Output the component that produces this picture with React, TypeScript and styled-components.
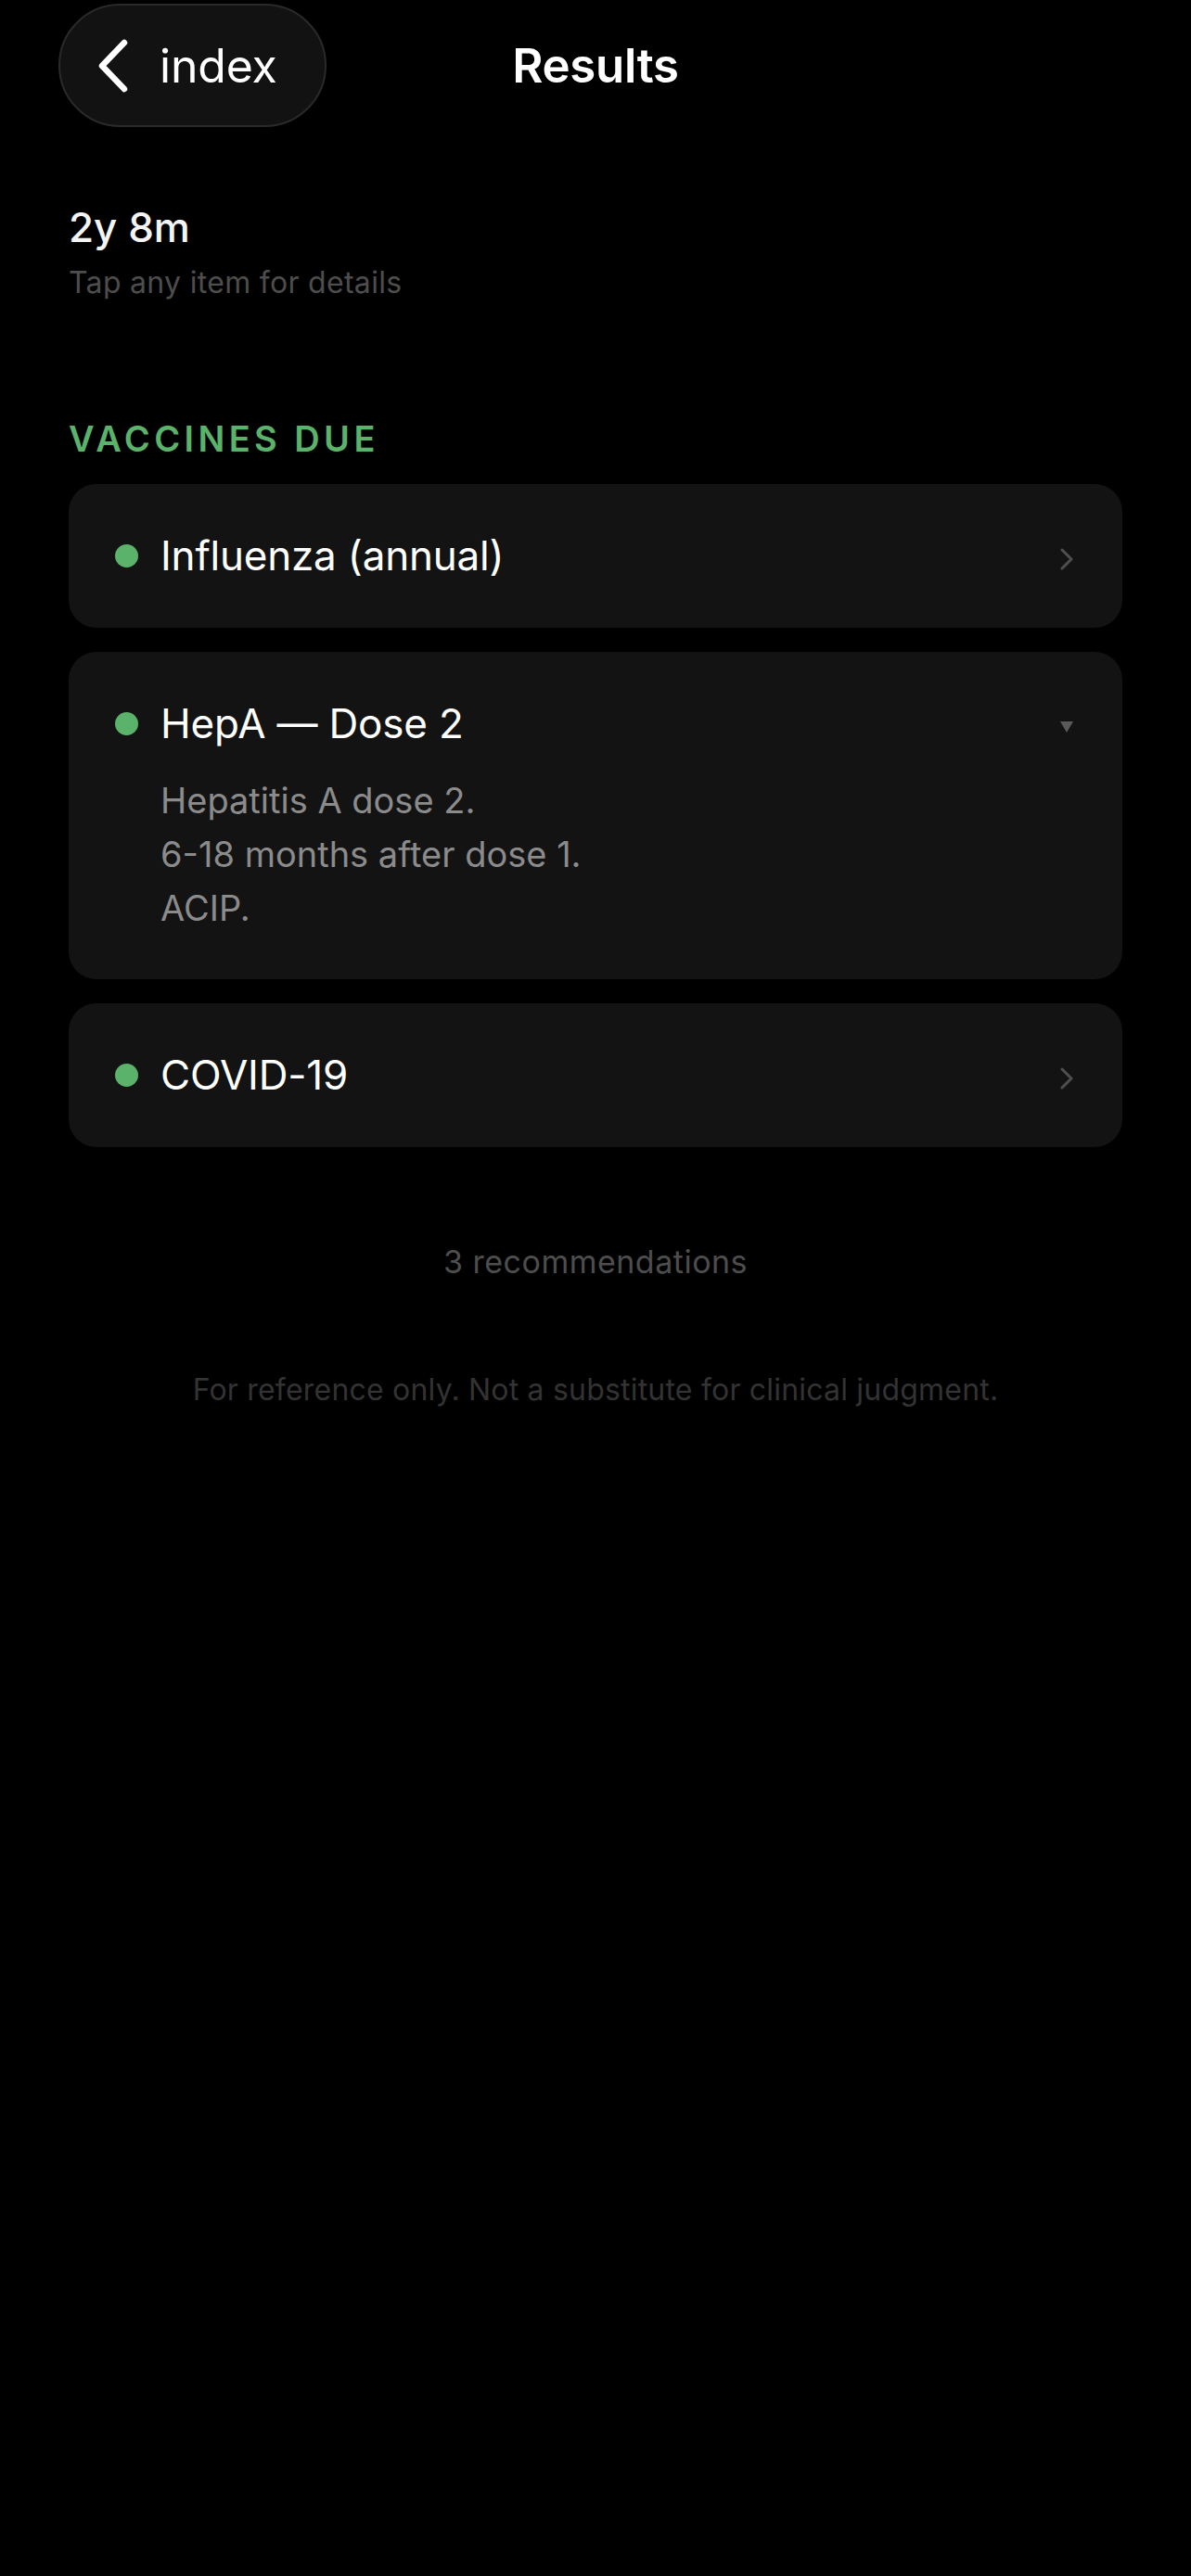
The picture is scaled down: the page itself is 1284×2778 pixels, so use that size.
import React from "react";
import styled, { createGlobalStyle } from "styled-components";

const GlobalStyle = createGlobalStyle`
  html, body {
    margin: 0;
    padding: 0;
    background: #000;
  }
  body {
    font-family: "Inter", "Noto Sans", sans-serif;
    -webkit-font-smoothing: antialiased;
    color: #fff;
  }
`;

interface Recommendation {
  id: string;
  title: string;
  details?: string[];
  open?: boolean;
}

const recommendations: Recommendation[] = [
  { id: "flu", title: "Influenza (annual)" },
  {
    id: "hepa",
    title: "HepA — Dose 2",
    details: ["Hepatitis A dose 2.", "6-18 months after dose 1.", "ACIP."],
    open: true,
  },
  { id: "covid", title: "COVID-19" },
];

const Screen = styled.div`
  min-height: 2778px;
  background: #000;
`;

const NavBar = styled.header`
  display: grid;
  grid-template-columns: 1fr auto 1fr;
  align-items: center;
  padding: 4px 63px 0;
  height: 137px;
  box-sizing: border-box;
`;

const BackPill = styled.button`
  justify-self: start;
  display: flex;
  align-items: center;
  gap: 33px;
  width: 289px;
  height: 133px;
  box-sizing: border-box;
  padding: 0 0 0 40px;
  border-radius: 67px;
  background: #121212;
  border: 2px solid #2a2a2a;
  color: #fff;
  font-family: inherit;
  font-size: 50px;
  font-weight: 400;
  letter-spacing: -0.2px;
  cursor: pointer;
`;

const Title = styled.h1`
  margin: 0;
  font-size: 51px;
  font-weight: 600;
  letter-spacing: -0.3px;
  color: #fff;
`;

const Content = styled.main`
  padding: 0 74px;
`;

const Summary = styled.section`
  margin-top: 82px;
`;

const Age = styled.div`
  font-size: 44px;
  line-height: 53px;
  font-weight: 500;
  color: #f4f4f4;
`;

const Hint = styled.div`
  margin-top: 13px;
  font-size: 32px;
  line-height: 40px;
  letter-spacing: 0.3px;
  color: #4d4d4d;
`;

const SectionLabel = styled.h2`
  margin: 125px 0 25px;
  font-size: 38px;
  line-height: 47px;
  font-weight: 600;
  letter-spacing: 4.4px;
  color: #5bb36b;
`;

const List = styled.div`
  display: flex;
  flex-direction: column;
  gap: 26px;
`;

const Card = styled.div`
  background: #131313;
  border-radius: 30px;
  padding: 51px 53px 51px 50px;
`;

const Row = styled.div`
  display: flex;
  align-items: center;
  height: 53px;
`;

const Dot = styled.span`
  width: 25px;
  height: 25px;
  border-radius: 50%;
  background: #5bb36b;
  flex-shrink: 0;
  margin-right: 24px;
`;

const ItemTitle = styled.span`
  flex: 1;
  font-size: 44px;
  line-height: 53px;
  color: #fff;
  letter-spacing: -0.2px;
`;

const Indicator = styled.span`
  display: flex;
  margin-top: 6px;
`;

const Details = styled.div`
  margin: 27px 0 -3px 49px;
`;

const DetailLine = styled.div`
  font-size: 38px;
  line-height: 58px;
  color: #8b8b8b;
`;

const Counter = styled.div`
  margin-top: 103px;
  text-align: center;
  font-size: 34px;
  line-height: 42px;
  letter-spacing: 0.5px;
  color: #4d4d4d;
`;

const Disclaimer = styled.div`
  margin-top: 97px;
  text-align: center;
  font-size: 32px;
  line-height: 40px;
  letter-spacing: 0.2px;
  color: #333;
`;

const BackChevron = () => (
  <svg width="34" height="58" viewBox="0 0 34 58" fill="none">
    <path
      d="M29 4 L5 29 L29 54"
      stroke="#fff"
      strokeWidth="6.5"
      strokeLinecap="round"
      strokeLinejoin="round"
    />
  </svg>
);

const RowChevron = () => (
  <svg width="14" height="24" viewBox="0 0 14 24" fill="none">
    <path
      d="M2 2 L12 12 L2 22"
      stroke="#4f4f4f"
      strokeWidth="3"
      strokeLinecap="round"
      strokeLinejoin="round"
    />
  </svg>
);

const OpenCaret = () => (
  <svg width="14" height="14" viewBox="0 0 14 14">
    <path d="M0 1 L14 1 L7 13 Z" fill="#5a5a5a" />
  </svg>
);

const Item = ({ item }: { item: Recommendation }) => (
  <Card>
    <Row>
      <Dot />
      <ItemTitle>{item.title}</ItemTitle>
      <Indicator>{item.open ? <OpenCaret /> : <RowChevron />}</Indicator>
    </Row>
    {item.open && item.details && (
      <Details>
        {item.details.map((line) => (
          <DetailLine key={line}>{line}</DetailLine>
        ))}
      </Details>
    )}
  </Card>
);

export default function App() {
  return (
    <>
      <GlobalStyle />
      <Screen>
        <NavBar>
          <BackPill type="button">
            <BackChevron />
            index
          </BackPill>
          <Title>Results</Title>
          <span />
        </NavBar>
        <Content>
          <Summary>
            <Age>2y 8m</Age>
            <Hint>Tap any item for details</Hint>
          </Summary>
          <SectionLabel>VACCINES DUE</SectionLabel>
          <List>
            {recommendations.map((item) => (
              <Item key={item.id} item={item} />
            ))}
          </List>
          <Counter>{recommendations.length} recommendations</Counter>
          <Disclaimer>
            For reference only. Not a substitute for clinical judgment.
          </Disclaimer>
        </Content>
      </Screen>
    </>
  );
}
